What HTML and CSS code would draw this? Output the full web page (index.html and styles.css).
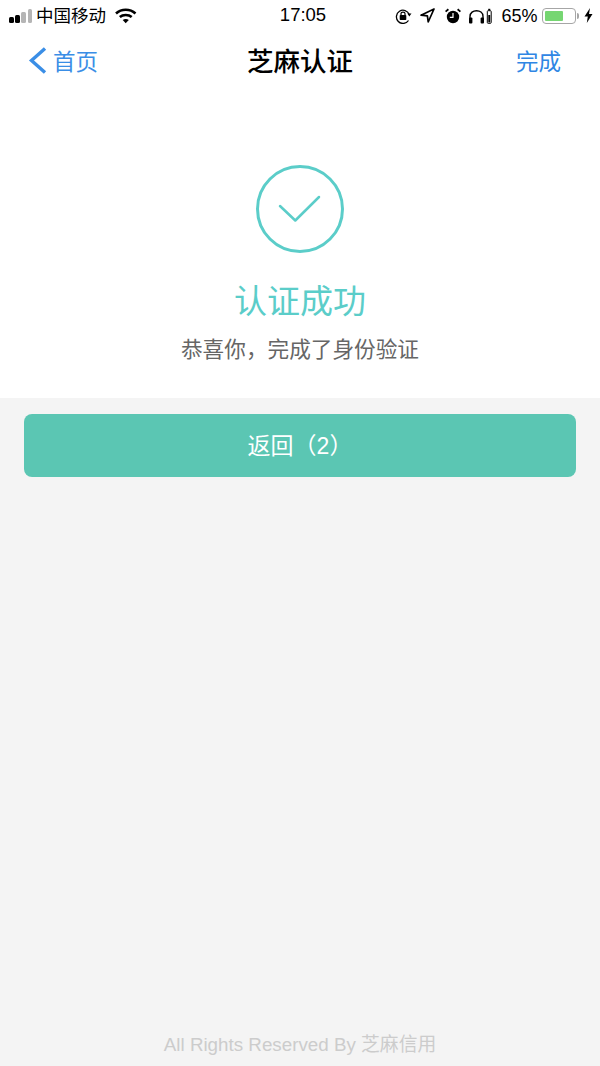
FILE: index.html
```html
<!DOCTYPE html>
<html lang="zh-CN">
<head>
    <meta charset="UTF-8">
    <meta name="viewport" content="width=device-width, initial-scale=1.0">
    <title>芝麻认证</title>
    <link rel="stylesheet" href="styles.css">
</head>
<body>
    <div class="page">
        <div class="top">
            <div class="status">
                <div class="status-left">
                    <div class="signal">
                        <i class="on"></i><i class="on"></i><i></i><i></i>
                    </div>
                    <span class="carrier">中国移动</span>
                    <svg class="wifi" width="22" height="16" viewBox="0 0 22 16">
                        <path d="M1 5.5C6.5 0.5 15 0.5 20.500 5.500" fill="none" stroke="#000" stroke-width="2.600"/>
                        <path d="M4.800 9C8 6.300 13.500 6.300 16.700 9" fill="none" stroke="#000" stroke-width="2.600"/>
                        <path d="M7.700 12L10.700 15.200L13.800 12C12 10.600 9.500 10.600 7.700 12Z" fill="#000"/>
                    </svg>
                </div>
                <span class="clock">17:05</span>
                <div class="status-right">
                    <!-- rotation lock -->
                    <svg width="17" height="16" viewBox="0 0 17 16">
                        <path d="M14.200 6.500A6.600 6.600 0 1 0 13.500 12.500" fill="none" stroke="#000" stroke-width="1.300"/>
                        <path d="M12.400 5.500L16.500 5.500L14.300 8.500Z" fill="#000"/>
                        <rect x="4.700" y="7" width="6.600" height="5" rx="0.800" fill="#000"/>
                        <path d="M6 7V5.600C6 3.500 10 3.500 10 5.600V7" fill="none" stroke="#000" stroke-width="1.200"/>
                    </svg>
                    <!-- location -->
                    <svg class="gap-loc" width="15" height="15" viewBox="0 0 15 15">
                        <path d="M14 1L1 7.200L7.400 7.800L8.200 14Z" fill="none" stroke="#000" stroke-width="1.700" stroke-linejoin="round"/>
                    </svg>
                    <!-- alarm -->
                    <svg class="gap-alarm" width="16" height="16" viewBox="0 0 16 16">
                        <circle cx="8" cy="9" r="6.200" fill="#000"/>
                        <path d="M8 5V9.300H4.800" fill="none" stroke="#fff" stroke-width="1.200"/>
                        <path d="M0.600 3.600L3.400 1.200M15.400 3.600L12.600 1.200" stroke="#000" stroke-width="1.800"/>
                    </svg>
                    <!-- headphones with battery -->
                    <svg class="gap-head" width="24" height="16" viewBox="0 0 24 16">
                        <path d="M2 12V8.500C2 0.800 15 0.800 15 8.500V12" fill="none" stroke="#000" stroke-width="1.400"/>
                        <rect x="1" y="9.500" width="3.400" height="6" rx="1" fill="#000"/>
                        <rect x="12.600" y="9.500" width="3.400" height="6" rx="1" fill="#000"/>
                        <rect x="19.300" y="2.700" width="3.900" height="12.600" rx="0.800" fill="none" stroke="#000"/>
                        <rect x="20.300" y="7" width="1.900" height="7.400" fill="#000"/>
                        <rect x="20.200" y="0.800" width="2.100" height="1.600" fill="#000"/>
                    </svg>
                    <span class="percent">65%</span>
                    <div class="battery"><div class="battery-level" style="width: 65%"></div></div>
                    <div class="battery-tip"></div>
                    <svg class="bolt" width="9" height="15" viewBox="0 0 9 15">
                        <path d="M6 0L0.500 8.500H3.800L2.800 15L8.500 6H5Z" fill="#000"/>
                    </svg>
                </div>
            </div>

            <div class="nav">
                <a class="back">
                    <svg width="19" height="28" viewBox="0 0 19 28">
                        <path d="M17 2.500L3.500 14.500L17 26.500" fill="none" stroke="#3a8ee6" stroke-width="3.400"/>
                    </svg>
                    <span>首页</span>
                </a>
                <h1 class="nav-title">芝麻认证</h1>
                <a class="done">完成</a>
            </div>

            <div class="result">
                <svg class="result-icon" width="90" height="90" viewBox="0 0 90 90">
                    <circle cx="45" cy="45" r="42.500" fill="none" stroke="#5bcdc9" stroke-width="3"/>
                    <path d="M25 42L40.300 56.500L64 33" fill="none" stroke="#5bcdc9" stroke-width="2.500" stroke-linecap="round" stroke-linejoin="round"/>
                </svg>
                <h2 class="result-title">认证成功</h2>
                <p class="result-text">恭喜你，完成了身份验证</p>
            </div>
        </div>

        <div class="actions">
            <button class="button">返回（2）</button>
        </div>

        <div class="footer">All Rights Reserved By 芝麻信用</div>
    </div>
</body>
</html>
```

FILE: styles.css
```css
* { box-sizing: border-box; }
html, body { margin: 0; padding: 0; }
body { font-family: "Liberation Sans", "Noto Sans CJK SC", sans-serif; background: #f4f4f4; }
.page { height: 1066px; display: flex; flex-direction: column; overflow: hidden; }
.top { background: #fff; height: 398px; }

.status { height: 31px; padding: 0 7px 0 9px; display: flex; align-items: center; position: relative; color: #000; }
.status-left { display: flex; align-items: center; }
.signal { display: flex; align-items: flex-end; gap: 1.700px; height: 15px; }
.signal i { width: 4.500px; background: #b5b5b5; border-radius: 1.500px; }
.signal i:nth-child(1) { height: 6px; }
.signal i:nth-child(2) { height: 8px; }
.signal i:nth-child(3) { height: 11px; }
.signal i:nth-child(4) { height: 14px; }
.signal i.on { background: #000; }
.carrier { font-size: 17.500px; margin-left: 4px; line-height: 22px; }
.wifi { margin-left: 9px; }
.clock { position: absolute; left: 6px; right: 0; top: 4px; text-align: center; font-size: 18.500px; line-height: 22px; pointer-events: none; }
.status-right { margin-left: auto; display: flex; align-items: center; }
.gap-loc { margin-left: 8px; }
.gap-alarm { margin-left: 10px; }
.gap-head { margin-left: 7px; }
.percent { font-size: 18px; margin-left: 9.500px; line-height: 22px; }
.battery { width: 34px; height: 16px; margin-left: 4.500px; padding: 2px; border: 1.500px solid #a6a6a6; border-radius: 4px; }
.battery-level { height: 100%; background: #76d672; border-radius: 1px; }
.battery-tip { width: 2px; height: 6px; margin-left: 1px; background: #a6a6a6; border-radius: 0 2px 2px 0; }
.bolt { margin-left: 5px; }

.nav { height: 57px; padding: 0 39px 0 28px; display: flex; align-items: center; justify-content: space-between; position: relative; }
.back { display: flex; align-items: center; color: #3a8ee6; font-size: 22.500px; }
.back span { margin-left: 6px; }
.done { color: #2f86e4; font-size: 22.500px; }
.nav-title { position: absolute; left: 0; right: 0; margin: 0; text-align: center; font-size: 26.500px; font-weight: 500; color: #000; }

.result { display: flex; flex-direction: column; align-items: center; padding-top: 76px; }
.result-icon { display: block; }
.result-title { margin: 26px 0 0; font-size: 33px; line-height: 44px; font-weight: 400; color: #5bcdc9; }
.result-text { margin: 11px 0 0; font-size: 21.650px; line-height: 30px; color: #666; }

.actions { padding: 16px 24px 0; }
.button { display: block; width: 100%; height: 63px; border: none; border-radius: 8px; background: #5bc6b3; color: #fff; font-family: inherit; font-size: 23px; padding: 0 0 4px; }

.footer { margin-top: auto; padding-bottom: 8px; text-align: center; font-size: 18.800px; line-height: 26px; color: #ccc; }
```
